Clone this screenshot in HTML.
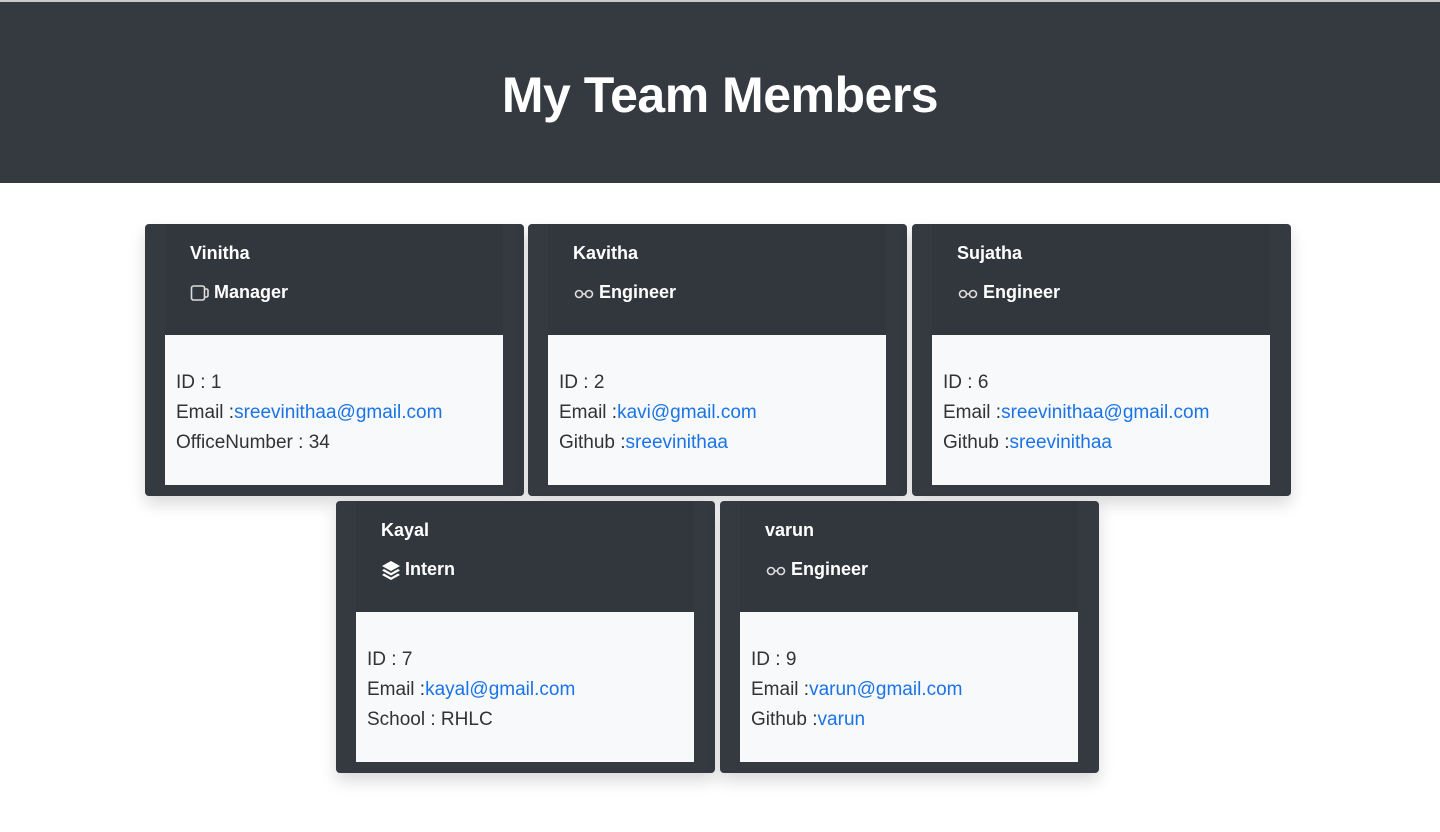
<!DOCTYPE html>
<html><head><meta charset="utf-8"><style>
*{margin:0;padding:0;box-sizing:border-box}
body{width:1440px;height:832px;background:#fff;font-family:"Segoe UI","Liberation Sans",sans-serif;position:relative;overflow:hidden}
.top{position:absolute;left:0;top:0;width:1440px;height:2px;background:#c8c9cc}
.hdr{position:absolute;left:0;top:2px;width:1440px;height:181px;background:#343a40;color:#fff;text-align:center}
.hdr h1{font-size:50px;font-weight:bold;line-height:187px;letter-spacing:-0.5px}
.card{position:absolute;width:379px;height:272px;background:#343a40;border-radius:4px;box-shadow:0 8px 16px rgba(0,0,0,.15)}
.inner{position:absolute;left:20px;top:0;width:338px;height:111px;background:#32373e}
.name{position:absolute;left:45px;top:19px;color:#fff;font-weight:bold;font-size:18px}
.role{position:absolute;left:45px;top:58px;color:#fff;font-weight:bold;font-size:18px;display:flex;align-items:center;gap:4px}
.body{position:absolute;left:20px;top:111px;width:338px;height:150px;background:#f8f9fa;padding:33px 11px;color:#333;font-size:19px;line-height:30px}
a{color:#1a73e8;text-decoration:none}
</style></head><body>
<div class="top"></div>
<div class="hdr"><h1>My Team Members</h1></div>

<div class="card" style="left:145px;top:224px">
<div class="inner"></div>
<div class="name">Vinitha</div>
<div class="role"><svg width="20" height="18" viewBox="0 0 20 18"><rect x="1.5" y="2" width="13" height="14" rx="2" fill="none" stroke="#ddd" stroke-width="1.6"/><path d="M14.5 5h2a1.5 1.5 0 0 1 1.5 1.5v5a1.5 1.5 0 0 1-1.5 1.5h-2" fill="none" stroke="#ddd" stroke-width="1.6"/></svg>Manager</div>
<div class="body">ID : 1<br>Email :<a>sreevinithaa@gmail.com</a><br>OfficeNumber : 34</div>
</div>

<div class="card" style="left:528px;top:224px">
<div class="inner"></div>
<div class="name">Kavitha</div>
<div class="role"><svg width="22" height="12" viewBox="0 0 22 12"><circle cx="6" cy="7" r="3.5" fill="none" stroke="#ddd" stroke-width="1.6"/><circle cx="16" cy="7" r="3.5" fill="none" stroke="#ddd" stroke-width="1.6"/><path d="M9.5 7h3" stroke="#ddd" stroke-width="1.6"/></svg>Engineer</div>
<div class="body">ID : 2<br>Email :<a>kavi@gmail.com</a><br>Github :<a>sreevinithaa</a></div>
</div>

<div class="card" style="left:912px;top:224px">
<div class="inner"></div>
<div class="name">Sujatha</div>
<div class="role"><svg width="22" height="12" viewBox="0 0 22 12"><circle cx="6" cy="7" r="3.5" fill="none" stroke="#ddd" stroke-width="1.6"/><circle cx="16" cy="7" r="3.5" fill="none" stroke="#ddd" stroke-width="1.6"/><path d="M9.5 7h3" stroke="#ddd" stroke-width="1.6"/></svg>Engineer</div>
<div class="body">ID : 6<br>Email :<a>sreevinithaa@gmail.com</a><br>Github :<a>sreevinithaa</a></div>
</div>

<div class="card" style="left:336px;top:501px">
<div class="inner"></div>
<div class="name">Kayal</div>
<div class="role"><svg width="20" height="20" viewBox="0 0 20 20"><path d="M10 1L19 6 10 11 1 6z" fill="#fff"/><path d="M3 9L10 13 17 9 19 10.5 10 15.5 1 10.5z" fill="#fff"/><path d="M3 13.5L10 17.5 17 13.5 19 15 10 20 1 15z" fill="#fff"/></svg>Intern</div>
<div class="body">ID : 7<br>Email :<a>kayal@gmail.com</a><br>School : RHLC</div>
</div>

<div class="card" style="left:720px;top:501px">
<div class="inner"></div>
<div class="name">varun</div>
<div class="role"><svg width="22" height="12" viewBox="0 0 22 12"><circle cx="6" cy="7" r="3.5" fill="none" stroke="#ddd" stroke-width="1.6"/><circle cx="16" cy="7" r="3.5" fill="none" stroke="#ddd" stroke-width="1.6"/><path d="M9.5 7h3" stroke="#ddd" stroke-width="1.6"/></svg>Engineer</div>
<div class="body">ID : 9<br>Email :<a>varun@gmail.com</a><br>Github :<a>varun</a></div>
</div>
</body></html>
